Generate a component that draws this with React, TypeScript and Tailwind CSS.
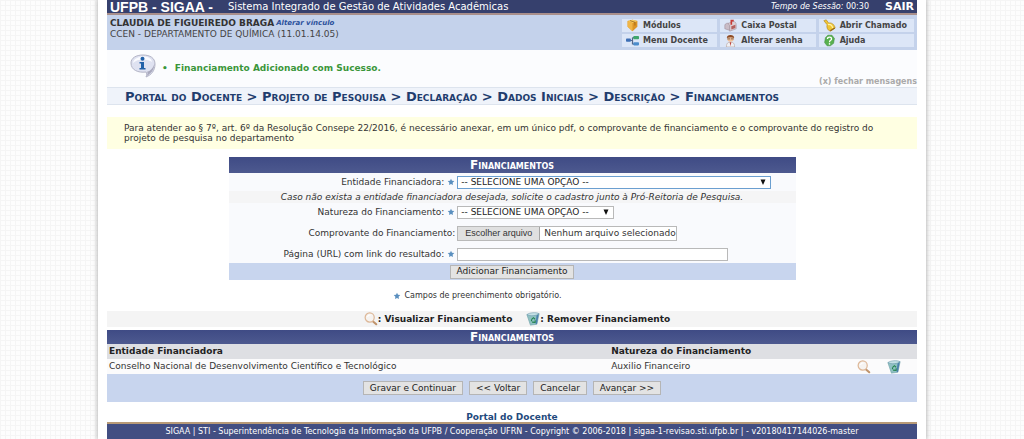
import React, { useState } from "react";
import clsx from "clsx";

type MenuItem = { label: string; icon: React.ReactNode };

const ModulesIcon = () => (
  <svg viewBox="0 0 16 16" className="w-[13px] h-[13px]">
    <path d="M2 2.500 8 1l6 1.500v7L8 15 2 9.500z" fill="#dc9424" />
    <path d="M2 2.500 8 1l6 1.500L8 5z" fill="#f7cf62" />
    <path d="M2 2.500 8 5v10L2 9.500z" fill="#f0b545" />
    <path d="M5 2 11 4v4" stroke="#9a641a" strokeWidth="1" fill="none" />
  </svg>
);

const TreeIcon = () => (
  <svg viewBox="0 0 16 16" className="w-[13px] h-[13px]">
    <path d="M5 8h3M8 4.500v8M8 4.500h2M8 12.500h2" stroke="#53688c" strokeWidth="1.500" fill="none" />
    <rect x="0" y="5.500" width="6" height="4" rx="1" fill="#3d6fb5" />
    <rect x="9" y="2.500" width="7" height="4" rx="1" fill="#3fa66d" />
    <rect x="9" y="10" width="7" height="4" rx="1" fill="#4b8ccb" />
  </svg>
);

const MailboxIcon = () => (
  <svg viewBox="0 0 16 16" className="w-[13px] h-[13px]">
    <path d="M1 8c0-3 5-4 6-1v7l-6-2z" fill="#c9bcc6" stroke="#95818d" strokeWidth=".6" />
    <path d="M5 5.500 11 3c3 0 4 2 4 4v5l-8 3V8z" fill="#ddd0d6" stroke="#95818d" strokeWidth=".6" />
    <path d="M8 1h4v2h-2v4H8z" fill="#c83a34" />
    <path d="m9 9 5-2v4l-5 2z" fill="#b4605e" />
  </svg>
);

const UserIcon = () => (
  <svg viewBox="0 0 16 16" className="w-[13px] h-[13px]">
    <path d="M3 16c0-5 2-6 5-6s5 1 5 6z" fill="#eef0f5" stroke="#b39a90" strokeWidth=".7" />
    <circle cx="8" cy="5.500" r="4" fill="#eec09b" />
    <path d="M3.500 5C3 0 13 0 12.500 5 10 3.500 6 3.500 3.500 5z" fill="#8b4a25" />
    <path d="M4 6h3.500M8.500 6H12" stroke="#70503c" strokeWidth="1" />
    <path d="m7 10 1 5 1-5z" fill="#bf4339" />
  </svg>
);

const BellIcon = () => (
  <svg viewBox="0 0 16 16" className="w-[13px] h-[13px]">
    <path d="M1 2 4 1l3 4c4-1 7 2 8 6l-6 4c-3-1-5-4-4-8z" fill="#efc535" stroke="#ad821a" strokeWidth=".7" />
    <path d="M6 7c3-1 5 1 6 4" stroke="#fff3a8" strokeWidth="1.500" fill="none" />
    <path d="m9 14.500 5.500-3.500" stroke="#91661c" strokeWidth="1.500" />
  </svg>
);

const HelpIcon = () => (
  <svg viewBox="0 0 16 16" className="w-[13px] h-[13px]">
    <path d="M6 1.500h5l3 4-1 6-4 3H5l-3-4 1-6z" fill="#58b04f" stroke="#3b8b3c" strokeWidth=".7" />
    <path d="M5.500 6c0-3 5-3 5 0 0 2-2.500 1.500-2.500 4" stroke="#fff" strokeWidth="1.600" fill="none" />
    <circle cx="8" cy="12.200" r="1" fill="#fff" />
  </svg>
);

const InfoIcon = () => (
  <svg viewBox="0 0 26 24" className="w-[26px] h-6 shrink-0">
    <path
      d="M13 1C20 1 25 4 25 10c0 7-4 11-9 13 1-2 1-4 0-5C8 19 1 16 1 9 1 4 6 1 13 1z"
      fill="#dfe2f1"
      stroke="#b3b4c6"
      strokeWidth="1"
    />
    <path d="M24.500 9c0 7-4 11-8 13 2-3 1-4 0-4 4-1 7-4 8-9z" fill="#a9a9bd" />
    <path d="M3 9c1-8 18-9 19-1-4-3-14-4-19 1z" fill="#fafbff" />
    <circle cx="12.500" cy="4.800" r="2" fill="#2261a8" />
    <path d="M9.500 8h4.500v6h1.500v1.500h-6V14H11V9.500H9.500z" fill="#2261a8" />
  </svg>
);

const MagnifierIcon = () => (
  <svg viewBox="0 0 16 16" className="w-[14px] h-[14px]">
    <path d="m10 10.500 4 3.500" stroke="#c0946c" strokeWidth="2.400" strokeLinecap="round" />
    <circle cx="6.500" cy="6.300" r="5.200" fill="#f6f3f0" stroke="#ddb797" strokeWidth="1.400" />
    <path d="M4 5.500C4.500 4 6 3.300 7.500 3.500" stroke="#fff" strokeWidth="1.300" fill="none" />
  </svg>
);

const TrashIcon = () => (
  <svg viewBox="0 0 16 16" className="w-[14px] h-[14px]">
    <path d="M1 3 15 2 12.500 14 5 15z" fill="#8fc0c2" stroke="#6a9ba4" strokeWidth=".6" />
    <path d="M1 3C4 .5 12 0 15 2 12 4.500 5 5 1 3z" fill="#c5e1e6" stroke="#5f8fa5" strokeWidth=".6" />
    <path d="M6.500 8.500 8.500 6.500l2 2M10.500 9.500v2.300L7 11.500M6.300 10.500v-2" stroke="#22824e" strokeWidth="1.300" fill="none" />
    <path d="m12 4 2.500-1.500L12.500 13.500l-1.500.5z" fill="#4a7fae" />
  </svg>
);

const Star = () => (
  <svg viewBox="0 0 8 8" className="w-2 h-2 inline-block">
    <path d="m4 .8 1 2 2.300.3-1.700 1.600.4 2.300-2-1.100L2 7l.4-2.300L.7 3.100 3 2.800z" fill="#5a8fbf" />
  </svg>
);

const menuItems: MenuItem[] = [
  { label: "Módulos", icon: <ModulesIcon /> },
  { label: "Caixa Postal", icon: <MailboxIcon /> },
  { label: "Abrir Chamado", icon: <BellIcon /> },
  { label: "Menu Docente", icon: <TreeIcon /> },
  { label: "Alterar senha", icon: <UserIcon /> },
  { label: "Ajuda", icon: <HelpIcon /> },
];

const financings = [
  {
    entity: "Conselho Nacional de Desenvolvimento Científico e Tecnológico",
    nature: "Auxilio Financeiro",
  },
];

const Button = ({ text }: { text: string }) => (
  <button
    type="button"
    className="h-[14px] px-[6px] flex items-center border border-[#b5b5b5] bg-[#e3e3e3] text-[9px] leading-none text-[#222] whitespace-nowrap"
  >
    {text}
  </button>
);

const Select = ({ id, className }: { id: string; className: string }) => (
  <div className={clsx("relative", className)}>
    <select id={id} className="block w-full h-[13px] pl-[3px] appearance-none bg-white border border-inherit text-[9px] leading-none text-[#222]">
      <option>-- SELECIONE UMA OPÇÃO --</option>
    </select>
    <svg viewBox="0 0 6 6" className="absolute right-[5px] top-[3px] w-[6px] h-[6px] pointer-events-none">
      <path d="M.5.500h5L3 6z" fill="#111" />
    </svg>
  </div>
);

const FieldLabel = ({ id, text, required }: { id: string; text: string; required?: boolean }) => (
  <label htmlFor={id} className="flex justify-end items-center gap-[3px]">
    {text}
    {required && <Star />}
  </label>
);

const Header = () => (
  <header>
    <div className="h-[15px] pl-[3px] pr-[3px] flex items-center bg-[#36406d] border-b-2 border-[#a98f8b] text-white">
      <h1 className="font-['Liberation_Sans',sans-serif] text-[14px] leading-none font-bold w-[118px]">UFPB - SIGAA -</h1>
      <span className="text-[10px] leading-none">Sistema Integrado de Gestão de Atividades Acadêmicas</span>
      <span className="ml-auto text-[8px] leading-none">
        <em>Tempo de Sessão:</em> 00:30
      </span>
      <a href="#sair" className="ml-4 text-[11px] leading-none font-bold">SAIR</a>
    </div>
    <div className="h-[35px] flex justify-between bg-[#c4d2eb]">
      <div className="pl-[3px] pt-[3px] text-[9px] leading-[11px] text-[#444]">
        <p className="flex items-center gap-[2px]">
          <strong className="text-[#333]">CLAUDIA DE FIGUEIREDO BRAGA</strong>
          <a href="#vinculo" className="text-[7px] font-bold italic text-[#2c519c]">Alterar vínculo</a>
        </p>
        <p>CCEN - DEPARTAMENTO DE QUÍMICA (11.01.14.05)</p>
      </div>
      <nav className="w-[292px] mr-[3px] pt-1 grid grid-cols-3 auto-rows-[13px] gap-x-[3px] gap-y-[2px]">
        {menuItems.map(item => (
          <a key={item.label} href="#menu" className="pl-1 flex items-center gap-1 bg-[#dce6f7] text-[8px] leading-none font-bold text-[#444]">
            {item.icon}
            {item.label}
          </a>
        ))}
      </nav>
    </div>
  </header>
);

const Message = ({ onClose }: { onClose: () => void }) => (
  <div className="h-[37px] pl-[23px] flex justify-between bg-[#fbfcfe]">
    <div className="pt-1 flex items-start">
      <InfoIcon />
      <ul className="pl-[6px] pt-[9px] text-[9px] leading-[11px] font-bold text-[#3a963a]">
        <li className="flex gap-[7px]"><span>•</span>Financiamento Adicionado com Sucesso.</li>
      </ul>
    </div>
    <button type="button" onClick={onClose} className="self-end text-[8px] leading-[10px] font-bold text-[#aaa]">
      (x) fechar mensagens
    </button>
  </div>
);

const FinancingForm = () => {
  const [url, setUrl] = useState("");

  return (
    <form onSubmit={e => e.preventDefault()} className="mt-2 w-[70%] mx-auto bg-[#f9fafd] text-[9px] leading-none text-[#333]">
      <h2 className="h-4 flex items-center justify-center bg-linear-to-b from-[#3f4b85] to-[#4d598f] text-white text-[12px] leading-none font-bold [font-variant:small-caps]">
        Financiamentos
      </h2>
      <div className="h-[18px] grid grid-cols-[40%_1fr] gap-x-[2px] items-center">
        <FieldLabel id="entidade" text="Entidade Financiadora:" required />
        <Select id="entidade" className="mr-[25px] border-[#6b9fd0]" />
      </div>
      <p className="h-3 flex items-center justify-center bg-[#f5f5f6] italic">
        Caso não exista a entidade financiadora desejada, solicite o cadastro junto à Pró-Reitoria de Pesquisa.
      </p>
      <div className="h-[18px] grid grid-cols-[40%_1fr] gap-x-[2px] items-center">
        <FieldLabel id="natureza" text="Natureza do Financiamento:" required />
        <Select id="natureza" className="w-[157px] border-[#b9b9b9]" />
      </div>
      <div className="h-6 grid grid-cols-[40%_1fr] gap-x-[2px] items-center">
        <FieldLabel id="comprovante" text="Comprovante do Financiamento:" />
        <div className="flex">
          <input id="comprovante" type="file" className="sr-only" />
          <label htmlFor="comprovante" className="h-[15px] flex items-center border border-[#b9b9b9] bg-white whitespace-nowrap">
            <span className="h-full px-[7px] flex items-center border-r border-[#a5a5a5] bg-[#e0e0e0] font-['Liberation_Sans',sans-serif]">
              Escolher arquivo
            </span>
            <span className="pl-1">Nenhum arquivo selecionado</span>
          </label>
        </div>
      </div>
      <div className="h-[18px] grid grid-cols-[40%_1fr] gap-x-[2px] items-center">
        <FieldLabel id="url" text="Página (URL) com link do resultado:" required />
        <input
          id="url"
          type="text"
          value={url}
          onChange={e => setUrl(e.target.value)}
          className="w-[271px] h-[13px] px-1 bg-white border border-[#b9b9b9]"
        />
      </div>
      <div className="h-[17px] flex items-center justify-center bg-[#c8d5ee]">
        <Button text="Adicionar Financiamento" />
      </div>
    </form>
  );
};

const FinancingTable = () => (
  <table className="mt-[3px] w-full table-fixed text-[9px] leading-none text-left text-[#333]">
    <caption className="h-[14px] bg-linear-to-b from-[#3f4b85] to-[#4d598f] text-center text-white text-[12px] leading-[14px] font-bold [font-variant:small-caps]">
      Financiamentos
    </caption>
    <thead>
      <tr className="h-[15px] bg-[#dedfe3] text-[#222]">
        <th className="w-[62%] p-0 pl-[2px]">Entidade Financiadora</th>
        <th className="p-0 pl-[2px]">Natureza do Financiamento</th>
        <th className="w-[30px]"></th>
        <th className="w-[30px]"></th>
      </tr>
    </thead>
    <tbody>
      {financings.map(item => (
        <tr key={item.entity} className="h-[15px] bg-[#fbfbfc]">
          <td className="p-0 pl-[2px]">{item.entity}</td>
          <td className="p-0 pl-[2px]">{item.nature}</td>
          <td className="p-0">
            <button type="button" aria-label="Visualizar Financiamento" className="block"><MagnifierIcon /></button>
          </td>
          <td className="p-0">
            <button type="button" aria-label="Remover Financiamento" className="block"><TrashIcon /></button>
          </td>
        </tr>
      ))}
    </tbody>
  </table>
);

const App = () => {
  const [showMessage, setShowMessage] = useState(true);

  return (
    <div className="bg-[#fdfdfd] bg-[linear-gradient(#f5f5f5_1px,transparent_1px),linear-gradient(90deg,#f5f5f5_1px,transparent_1px)] bg-[size:5px_5px] font-['DejaVu_Sans',sans-serif]">
      <div className="mx-[98px] px-[9px] bg-white shadow-[0_0_4px_1px_#bbb]">
        <Header />
        {showMessage && <Message onClose={() => setShowMessage(false)} />}
        <nav className="h-[18px] pl-[18px] flex items-center bg-[#eff3fa] border-y border-[#dde4ee] text-[13px] leading-none font-bold text-[#1f3d6e] [font-variant:small-caps] whitespace-nowrap">
          Portal do Docente &gt; Projeto de Pesquisa &gt; Declaração &gt; Dados Iniciais &gt; Descrição &gt; Financiamentos
        </nav>
        <p className="mt-3 h-8 pl-[17px] pr-4 pt-[6px] bg-[#ffffe2] text-[9px] leading-[10px] text-[#333]">
          Para atender ao § 7º, art. 6º da Resolução Consepe 22/2016, é necessário anexar, em um único pdf, o comprovante de
          financiamento e o comprovante do registro do projeto de pesquisa no departamento
        </p>
        <FinancingForm />
        <p className="h-[31px] pr-[70px] flex items-center justify-center gap-1 text-[8px] leading-none text-[#333]">
          <Star />
          Campos de preenchimento obrigatório.
        </p>
        <div className="h-4 pl-[10px] flex items-center justify-center gap-[14px] bg-[#f4f4f4] text-[9px] leading-none font-bold text-[#222]">
          <span className="flex items-center"><MagnifierIcon />: Visualizar Financiamento</span>
          <span className="flex items-center"><TrashIcon />: Remover Financiamento</span>
        </div>
        <FinancingTable />
        <div className="h-7 flex items-center justify-center gap-[6px] bg-[#c8d5ee]">
          <Button text="Gravar e Continuar" />
          <Button text="<< Voltar" />
          <Button text="Cancelar" />
          <Button text="Avançar >>" />
        </div>
        <div className="h-5 flex items-end justify-center">
          <a href="#portal" className="text-[9px] leading-[10px] font-bold text-[#1f4a7d]">Portal do Docente</a>
        </div>
        <footer className="h-[17px] flex items-center justify-center bg-[#424e82] border-t-2 border-[#b89a77] text-[8px] leading-none text-white">
          SIGAA | STI - Superintendência de Tecnologia da Informação da UFPB / Cooperação UFRN - Copyright © 2006-2018 |
          sigaa-1-revisao.sti.ufpb.br | - v20180417144026-master
        </footer>
      </div>
    </div>
  );
};

export default App;
